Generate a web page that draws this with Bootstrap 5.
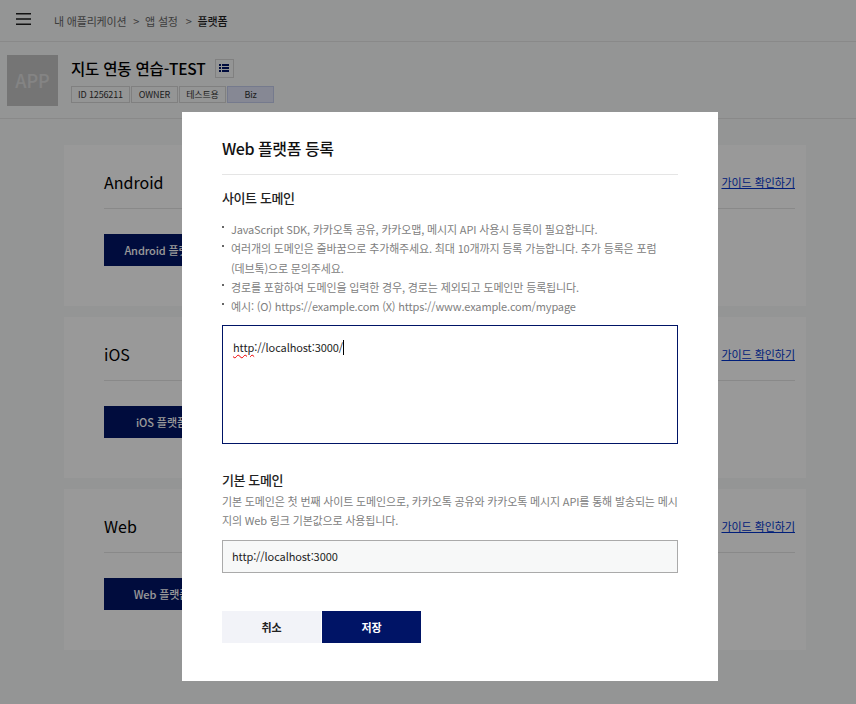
<!DOCTYPE html>
<html lang="ko">
<head>
<meta charset="utf-8">
<title>플랫폼</title>
<link rel="stylesheet" href="https://cdn.jsdelivr.net/npm/bootstrap@5.3.0/dist/css/bootstrap.min.css">
<style>
html,body{height:704px;overflow:hidden}
body{font-family:"Noto Sans CJK KR","Noto Sans",sans-serif;background:#f7f8f8;color:#1e1e1e;font-size:12px}
.topbar{height:42px;border-bottom:1px solid #e5e5e5;padding-left:16px}
.burger{display:block;margin:-3px 23px 0 0}
.crumb{font-size:11px;color:#666;letter-spacing:-.2px;padding-top:2px}
.crumb b{font-weight:500;color:#1e1e1e}
.crumb span{margin-left:7px}
.crumb span+span{margin-left:8px}
.crumb i{font-style:normal;margin-right:3px}
.apphead{height:77px;border-bottom:1px solid #e5e5e5;padding:13px 0 0 7px}
.appicon{width:51px;height:51px;background:#c4c4c4;color:#dcdcdc;font-size:18px;font-weight:500;margin-right:13px}
.apptitle{font-size:15.5px;font-weight:500;line-height:20px;color:#000;margin-top:3px;letter-spacing:-.2px}
.menubtn{width:19px;height:19px;border:1px solid #d6d6d6;margin-left:9px;margin-top:3px}
.tag{border:1px solid #d6d6d6;height:17px;font-size:9px;line-height:15px;text-align:center;margin-right:1px;color:#333;letter-spacing:-.15px}
.tag-id{width:59px}
.tag-plain{width:47px}
.tag-biz{background:#dfe3f7;border-color:#c4cbec;width:47px;margin-right:0}
.tagrow{margin-top:8px}
.panel{background:#fff;margin:0 50px 11px 64px;height:161px;padding:23px 11px 0 40px}
.panels{padding-top:26px}
.paneltitle{font-size:16px;font-weight:400;line-height:28px;color:#000;border-bottom:1px solid #e5e5e5;padding-bottom:12px;margin-bottom:25px}
.guide{font-size:11px;color:#0033cc;position:absolute;right:0;top:6px;letter-spacing:-.05px}
.solidbtn{background:#001466;color:#fff;font-size:11px;font-weight:500;border:0;height:32px;width:138px;border-radius:0;letter-spacing:-.1px}
.scrim{position:fixed;inset:0;background:rgba(0,0,0,.4)}
.sheet{position:absolute;left:182px;top:112px;width:536px;height:569px;background:#fff;padding:24px 40px}
.sheettitle{font-size:16px;font-weight:500;line-height:24px;color:#111;padding-bottom:14px;border-bottom:1px solid #e5e5e5;margin:0 0 13px;letter-spacing:-.45px}
.seclabel{font-size:13px;font-weight:500;line-height:20px;color:#222;margin:0;letter-spacing:-.4px}
.notes{list-style:none;padding:0;margin:12px 0 8.5px;color:#808080;font-size:11px;line-height:19.3px;letter-spacing:-.16px}
.notes li{padding-left:9px;position:relative}
.notes li::before{content:"";position:absolute;left:0;top:6px;width:2px;height:2px;background:#666}
.domainbox{height:119px;border:1px solid #001466;padding:11px 10px;font-size:11px;line-height:20px;color:#1e1e1e;letter-spacing:-.1px}
.typo{text-decoration:underline wavy #e00 1px;text-underline-offset:2px}
.caret{display:inline-block;width:1px;height:15px;background:#000;vertical-align:-3px}
.basehead{margin-top:26px}
.basedesc{color:#808080;font-size:11px;line-height:19px;margin:2px 0 10px;letter-spacing:-.16px}
.baseinput{height:33px;border:1px solid #aaa;background:#f7f8f8;line-height:31px;padding:0 9px;font-size:11px;color:#1e1e1e;letter-spacing:-.1px}
.actions{margin-top:38px}
.actbtn{width:99px;height:32px;font-size:11px;font-weight:700;border:0;border-radius:0;padding:0}
.act-cancel{background:#f2f3f8;color:#222;margin-right:1px}
.act-save{background:#001466;color:#fff}
</style>
</head>
<body>
<header class="topbar d-flex align-items-center">
  <svg class="burger" width="15" height="12" viewBox="0 0 15 12"><path fill="#1e1e1e" d="M0 0h15v1.5H0zM0 5.25h15v1.5H0zM0 10.5h15V12H0z"/></svg>
  <div class="crumb">내 애플리케이션<span><i>&gt;</i> 앱 설정</span><span><i>&gt;</i> <b>플랫폼</b></span></div>
</header>
<section class="apphead d-flex">
  <div class="appicon d-flex align-items-center justify-content-center">APP</div>
  <div>
    <div class="d-flex align-items-center">
      <div class="apptitle">지도 연동 연습-TEST</div>
      <div class="menubtn d-flex align-items-center justify-content-center">
        <svg width="10" height="8" viewBox="0 0 10 8"><path fill="#001466" d="M0 0h2v2H0zM3 0h7v2H3zM0 3h2v2H0zM3 3h7v2H3zM0 6h2v2H0zM3 6h7v2H3z"/></svg>
      </div>
    </div>
    <div class="tagrow d-flex">
      <div class="tag tag-id">ID 1256211</div><div class="tag tag-plain">OWNER</div><div class="tag tag-plain">테스트용</div><div class="tag tag-biz">Biz</div>
    </div>
  </div>
</section>
<main class="panels">
  <section class="panel">
    <div class="position-relative"><div class="paneltitle">Android</div><a class="guide" href="#">가이드 확인하기</a></div>
    <button class="solidbtn">Android 플랫폼 등록</button>
  </section>
  <section class="panel">
    <div class="position-relative"><div class="paneltitle">iOS</div><a class="guide" href="#">가이드 확인하기</a></div>
    <button class="solidbtn">iOS 플랫폼 등록</button>
  </section>
  <section class="panel">
    <div class="position-relative"><div class="paneltitle">Web</div><a class="guide" href="#">가이드 확인하기</a></div>
    <button class="solidbtn">Web 플랫폼 등록</button>
  </section>
</main>
<div class="scrim"></div>
<div class="sheet">
  <h2 class="sheettitle">Web 플랫폼 등록</h2>
  <h3 class="seclabel">사이트 도메인</h3>
  <ul class="notes">
    <li>JavaScript SDK, 카카오톡 공유, 카카오맵, 메시지 API 사용시 등록이 필요합니다.</li>
    <li>여러개의 도메인은 줄바꿈으로 추가해주세요. 최대 10개까지 등록 가능합니다. 추가 등록은 포럼<br>(데브톡)으로 문의주세요.</li>
    <li>경로를 포함하여 도메인을 입력한 경우, 경로는 제외되고 도메인만 등록됩니다.</li>
    <li>예시: (O) https://example.com (X) https://www.example.com/mypage</li>
  </ul>
  <div class="domainbox"><span class="typo">http</span>://localhost:3000/<span class="caret"></span></div>
  <h3 class="seclabel basehead">기본 도메인</h3>
  <p class="basedesc">기본 도메인은 첫 번째 사이트 도메인으로, 카카오톡 공유와 카카오톡 메시지 API를 통해 발송되는 메시지의 Web 링크 기본값으로 사용됩니다.</p>
  <div class="baseinput">http://localhost:3000</div>
  <div class="actions d-flex">
    <button class="actbtn act-cancel">취소</button>
    <button class="actbtn act-save">저장</button>
  </div>
</div>
<script src="https://cdn.jsdelivr.net/npm/bootstrap@5.3.0/dist/js/bootstrap.bundle.min.js"></script>
</body>
</html>
